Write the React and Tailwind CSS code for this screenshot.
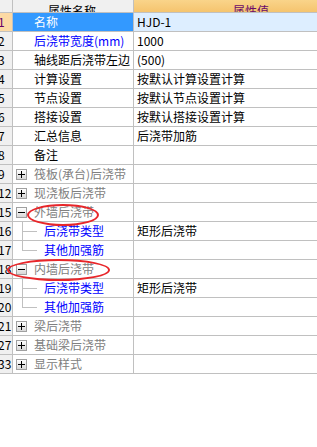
import React from "react";

const rows = [
  { n: "1", name: "名称", val: "HJD-1", sel: true },
  { n: "2", name: "后浇带宽度(mm)", val: "1000", blue: true },
  { n: "3", name: "轴线距后浇带左边", val: "(500)" },
  { n: "4", name: "计算设置", val: "按默认计算设置计算" },
  { n: "5", name: "节点设置", val: "按默认节点设置计算" },
  { n: "6", name: "搭接设置", val: "按默认搭接设置计算" },
  { n: "7", name: "汇总信息", val: "后浇带加筋" },
  { n: "8", name: "备注", val: "" },
  { n: "9", name: "筏板(承台)后浇带", group: "+" },
  { n: "12", name: "现浇板后浇带", group: "+" },
  { n: "15", name: "外墙后浇带", group: "-" },
  { n: "16", name: "后浇带类型", child: true, val: "矩形后浇带" },
  { n: "17", name: "其他加强筋", child: true, last: true },
  { n: "18", name: "内墙后浇带", group: "-" },
  { n: "19", name: "后浇带类型", child: true, val: "矩形后浇带" },
  { n: "20", name: "其他加强筋", child: true, last: true },
  { n: "21", name: "梁后浇带", group: "+" },
  { n: "27", name: "基础梁后浇带", group: "+" },
  { n: "33", name: "显示样式", group: "+" },
];

function Box({ sign }) {
  return (
    <div className="w-[11px] h-[11px] border border-[#a0a0a0] bg-gradient-to-b from-[#ffffff] to-[#d8d8d8] flex items-center justify-center relative shrink-0">
      <div className="absolute w-[7px] h-[1px] bg-black" />
      {sign === "+" && <div className="absolute w-[1px] h-[7px] bg-black" />}
    </div>
  );
}

export default function App() {
  return (
    <div
      className="relative w-[317px] h-[447px] bg-white overflow-hidden text-[12px] leading-none"
      style={{ fontFamily: '"Noto Sans CJK SC", "Noto Sans", sans-serif' }}
    >
      {/* header */}
      <div className="flex h-[13px] border-b border-[#c0c0c0] overflow-hidden">
        <div className="w-[13px] bg-[#f0f0f0] border-r border-[#c0c0c0] shrink-0" />
        <div className="w-[121px] bg-[#f0f0f0] border-r border-[#c0c0c0] shrink-0 flex justify-center items-end overflow-hidden">
          <span className="text-black text-[12px] leading-[12px] translate-y-[5px] -translate-x-[1px]">属性名称</span>
        </div>
        <div className="flex-1 bg-gradient-to-b from-[#f9d48a] to-[#f5c46e] flex items-end overflow-hidden pl-[99px]">
          <span className="text-[#6a0a6a] text-[12px] leading-[12px] translate-y-[5px]">属性值</span>
        </div>
      </div>
      {rows.map((r, i) => (
        <div key={i} className="flex h-[19px] border-b border-[#c0c0c0]">
          <div
            className={`w-[13px] shrink-0 border-r border-[#c0c0c0] flex items-center overflow-hidden ${
              r.sel ? "bg-[#fcd9a4] text-[#660066]" : "bg-[#f0f0f0] text-black"
            }`}
          >
            <span className="whitespace-nowrap -ml-[2px]">{r.n}</span>
          </div>
          <div
            className={`w-[121px] shrink-0 border-r border-[#c0c0c0] flex items-center whitespace-nowrap overflow-hidden ${
              r.sel ? "bg-[#3399ff] text-white" : ""
            }`}
          >
            {r.group ? (
              <div className="flex items-center pl-[3px] gap-[7px]">
                <Box sign={r.group} />
                <span className="text-[#808080]">{r.name}</span>
              </div>
            ) : r.child ? (
              <div className="flex items-center h-full pl-[9px]">
                <div className="relative w-[16px] h-full shrink-0">
                  <div className={`absolute left-0 top-0 w-[1px] bg-[#c0c0c0] ${r.last ? "h-[10px]" : "h-[20px]"}`} />
                  <div className="absolute left-0 top-[9px] w-[15px] h-[1px] bg-[#c0c0c0]" />
                </div>
                <span className="text-[#0000ff] pl-[6px]">{r.name}</span>
              </div>
            ) : (
              <span className={`pl-[21px] ${r.blue ? "text-[#0000ff]" : r.sel ? "text-white" : "text-black"}`}>
                {r.name}
              </span>
            )}
          </div>
          <div
            className={`flex-1 flex items-center pl-[3px] whitespace-nowrap overflow-hidden text-black ${
              r.sel ? "bg-[#ddeeff]" : ""
            }`}
          >
            {r.val}
          </div>
        </div>
      ))}
      {/* red ellipses */}
      <div className="absolute left-[27px] top-[204px] w-[72px] h-[22px] rounded-[50%] border-2 border-[#e8262a]" />
      <div className="absolute left-[7px] top-[259px] w-[103px] h-[22px] rounded-[50%] border-2 border-[#e8262a]" />
    </div>
  );
}
